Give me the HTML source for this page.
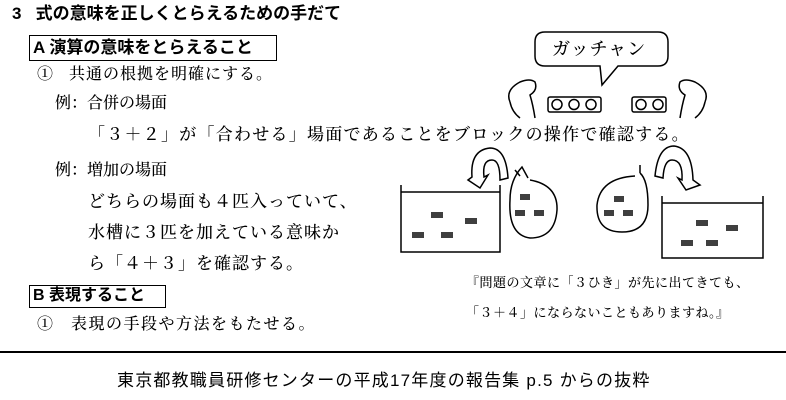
<!DOCTYPE html>
<html><head><meta charset="utf-8"><style>
body{margin:0;width:786px;height:400px;background:#fff;position:relative;overflow:hidden;color:#000}
.t{position:absolute;white-space:nowrap;line-height:1}
.g{font-family:"Liberation Sans","Noto Sans CJK JP",sans-serif;font-weight:bold}
.m{font-family:"Liberation Serif","Noto Serif CJK SC","Noto Sans CJK JP",serif;font-weight:500}
.box{position:absolute;border:1.5px solid #000}
</style></head><body>
<div class="t g" style="left:12px;top:5px;font-size:17px">3&nbsp;&nbsp;&nbsp;式の意味を正しくとらえるための手だて</div>
<div class="box" style="left:29px;top:35px;width:246px;height:24px"></div>
<div class="t g" style="left:33px;top:39px;font-size:17px">A 演算の意味をとらえること</div>
<div class="t m" style="left:37px;top:67px;font-size:16px;letter-spacing:1px">①&nbsp;&nbsp;&nbsp;共通の根拠を明確にする。</div>
<div class="t m" style="left:55px;top:96px;font-size:16px">例：合併の場面</div>
<div class="t m" style="left:88px;top:126px;font-size:17px;letter-spacing:1.25px">「３＋２」が「合わせる」場面であることをブロックの操作で確認する。</div>
<div class="t m" style="left:55px;top:163px;font-size:16px">例：増加の場面</div>
<div class="t m" style="left:88px;top:193px;font-size:17px;letter-spacing:1px">どちらの場面も４匹入っていて、</div>
<div class="t m" style="left:88px;top:224px;font-size:17px;letter-spacing:1px">水槽に３匹を加えている意味か</div>
<div class="t m" style="left:88px;top:255px;font-size:17px;letter-spacing:1px">ら「４＋３」を確認する。</div>
<div class="box" style="left:29px;top:285px;width:135px;height:21px"></div>
<div class="t g" style="left:33px;top:288px;font-size:16px">B 表現すること</div>
<div class="t m" style="left:37px;top:317px;font-size:16px;letter-spacing:1.5px">①&nbsp;&nbsp;&nbsp;表現の手段や方法をもたせる。</div>
<div style="position:absolute;left:0;top:351px;width:786px;height:1.5px;background:#000"></div>
<div class="t" style="left:117px;top:372px;font-size:17px;letter-spacing:1.2px;font-family:'Liberation Sans','Noto Sans CJK JP',sans-serif">東京都教職員研修センターの平成17年度の報告集 p.5 からの抜粋</div>
<div class="t m" style="left:466px;top:276px;font-size:13px;letter-spacing:.5px">『問題の文章に「３ひき」が先に出てきても、</div>
<div class="t m" style="left:466px;top:306px;font-size:13px;letter-spacing:.5px">「３＋４」にならないこともありますね。』</div>
<svg width="786" height="400" style="position:absolute;left:0;top:0" fill="none" stroke="#000" stroke-width="1.5">
<path d="M545 32 Q535 32 535 42 L535 56 Q535 66 545 66 L600 66 L602 85 L618 66 L658 66 Q668 66 668 56 L668 42 Q668 32 658 32 Z" fill="#fff"/>
<path d="M510 102 Q505 90 520 82 Q530 78 535 82 Q538 90 530 95 Q533 105 535 118 M520 118 Q512 112 510 102"/>
<path d="M705 102 Q710 90 695 82 Q685 78 680 82 Q677 90 685 95 Q682 105 680 118 M695 118 Q703 112 705 102"/>
<rect x="548" y="97" width="53" height="15" rx="2"/><rect x="632" y="97" width="34" height="15" rx="2"/>
<circle cx="557" cy="104.5" r="5"/><circle cx="574" cy="104.5" r="5"/><circle cx="591" cy="104.5" r="5"/><circle cx="641" cy="104.5" r="5"/><circle cx="658" cy="104.5" r="5"/>
<path d="M401 185 L401 252 L500 252 L500 185 M401 192 L500 192"/>
<path d="M662 196 L662 258 L763 258 L763 196 M662 203 L763 203"/>
<path d="M520 176 L515 170 M528 178 L522 167 Q510 180 510 200 Q508 235 530 238 Q555 238 557 210 Q558 185 530 180"/>
<path d="M640 173 L640 165 M635 176 Q600 178 597 205 Q596 232 622 232 Q648 232 648 205 Q648 180 640 173"/>
<path d="M468 180 L480 188 L488 175 L484 177 Q482 160 492 160 Q500 160 500 180 L508 178 Q506 148 490 148 Q470 150 472 177 Z"/>
<path d="M700 185 L686 190 L678 178 L682 180 Q683 160 672 160 Q664 160 663 178 L655 176 Q658 146 674 146 Q692 148 693 180 Z"/>
<g fill="#000" stroke="none" opacity="0.75">
<rect x="431" y="212" width="12" height="6"/><rect x="465" y="218" width="12" height="6"/><rect x="412" y="232" width="12" height="6"/><rect x="441" y="232" width="12" height="6"/>
<rect x="520" y="194" width="10" height="6"/><rect x="515" y="210" width="10" height="6"/><rect x="534" y="210" width="10" height="6"/>
<rect x="614" y="196" width="10" height="6"/><rect x="604" y="210" width="10" height="6"/><rect x="623" y="210" width="10" height="6"/>
<rect x="696" y="220" width="12" height="6"/><rect x="726" y="225" width="12" height="6"/><rect x="681" y="240" width="12" height="6"/><rect x="706" y="240" width="12" height="6"/>
</g>
</svg>
<div class="t m" style="left:552px;top:40px;font-size:18px;letter-spacing:1px">ガッチャン</div>
</body></html>
